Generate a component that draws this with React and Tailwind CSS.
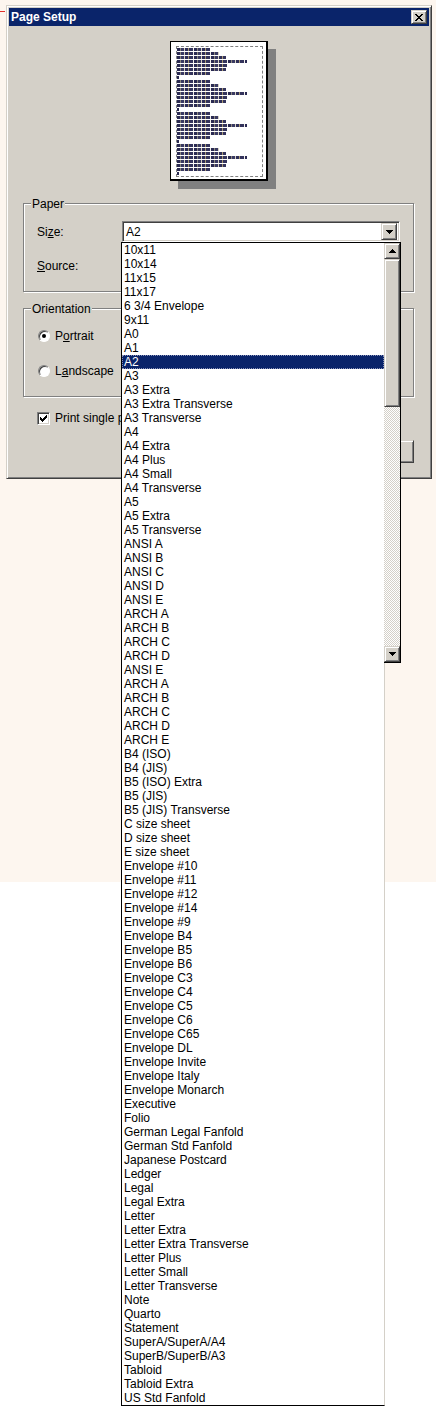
const sizes = [
  "10x11", "10x14", "11x15", "11x17", "6 3/4 Envelope", "9x11", "A0", "A1", "A2", "A3",
  "A3 Extra", "A3 Extra Transverse", "A3 Transverse", "A4", "A4 Extra", "A4 Plus", "A4 Small",
  "A4 Transverse", "A5", "A5 Extra", "A5 Transverse", "ANSI A", "ANSI B", "ANSI C", "ANSI D",
  "ANSI E", "ARCH A", "ARCH B", "ARCH C", "ARCH D", "ANSI E", "ARCH A", "ARCH B", "ARCH C",
  "ARCH D", "ARCH E", "B4 (ISO)", "B4 (JIS)", "B5 (ISO) Extra", "B5 (JIS)", "B5 (JIS) Transverse",
  "C size sheet", "D size sheet", "E size sheet", "Envelope #10", "Envelope #11", "Envelope #12",
  "Envelope #14", "Envelope #9", "Envelope B4", "Envelope B5", "Envelope B6", "Envelope C3",
  "Envelope C4", "Envelope C5", "Envelope C6", "Envelope C65", "Envelope DL", "Envelope Invite",
  "Envelope Italy", "Envelope Monarch", "Executive", "Folio", "German Legal Fanfold",
  "German Std Fanfold", "Japanese Postcard", "Ledger", "Legal", "Legal Extra", "Letter",
  "Letter Extra", "Letter Extra Transverse", "Letter Plus", "Letter Small", "Letter Transverse",
  "Note", "Quarto", "Statement", "SuperA/SuperA/A4", "SuperB/SuperB/A3", "Tabloid",
  "Tabloid Extra", "US Std Fanfold",
];

const selected = 8;

// widths of the fake text lines in the page thumbnail (one paragraph)
const para = [33, 42, 49, 70, 50, 49, 33, 2];

const raised =
  "border border-t-[#d4d0c8] border-l-[#d4d0c8] border-r-[#404040] border-b-[#404040] bg-[#d4d0c8] shadow-[inset_1px_1px_0_#fff,inset_-1px_-1px_0_#808080]";
const sunken =
  "border border-t-[#808080] border-l-[#808080] border-r-white border-b-white shadow-[inset_1px_1px_0_#404040,inset_-1px_-1px_0_#d4d0c8]";

const glyphs = {
  down: ["#######", ".#####.", "..###..", "...#..."],
  up: ["...#...", "..###..", ".#####.", "#######"],
  close: ["##....##", ".##..##.", "..####..", "...##...", "..####..", ".##..##.", "##....##"],
  check: ["......#", ".....##", "#...###", "##.###.", "#####..", ".###...", "..#...."],
};

function Pixels({ name }) {
  const rows = glyphs[name];
  return (
    <svg width={rows[0].length} height={rows.length} shapeRendering="crispEdges" className="block">
      {rows.flatMap((r, y) =>
        [...r].map((c, x) =>
          c === "#" ? <rect key={`${x}-${y}`} x={x} y={y} width="1" height="1" fill="#000" /> : null
        )
      )}
    </svg>
  );
}

function GroupBox({ label, className = "", children }) {
  return (
    <div className={`relative border border-[#808080] shadow-[inset_1px_1px_0_#fff,1px_1px_0_#fff] ${className}`}>
      <span className="absolute -top-[7px] left-[7px] bg-[#d4d0c8] px-[1px] leading-[14px]">{label}</span>
      {children}
    </div>
  );
}

function Combo({ value }) {
  return (
    <div className={`flex h-[21px] w-[278px] items-center bg-white p-[2px] ${sunken}`}>
      <span className="flex-1 truncate pl-[1px] leading-[14px]">{value}</span>
      <span className={`flex h-[17px] w-[16px] items-center justify-center ${raised}`}>
        <Pixels name="down" />
      </span>
    </div>
  );
}

function Radio({ checked }) {
  return (
    <span className="flex h-[12px] w-[12px] items-center justify-center rounded-full border border-t-[#808080] border-l-[#808080] border-r-white border-b-white bg-white shadow-[inset_1px_1px_0_#404040]">
      {checked && <span className="h-[4px] w-[4px] rounded-full bg-black" />}
    </span>
  );
}

function PagePreview() {
  return (
    <div className="flex justify-center">
      <div className="h-[140px] w-[98px] border border-black border-r-2 border-b-2 bg-white pb-[2px] pl-[5px] pr-[3px] pt-[4px] shadow-[8px_8px_0_#808080]">
        <div className="h-full border border-dashed border-[#808080] pt-[1px]">
          {[0, 1, 2, 3].map((b) => (
            <div key={b}>
              {para.map((w, i) => (
                <div
                  key={i}
                  className="mb-[1px] h-[3px] bg-[repeating-linear-gradient(90deg,#2a2a52_0_3px,#8e8a80_3px_4px,#3a3a62_4px_7px,#d8d2c2_7px_8px,#2e2e58_8px_11px,#a89a74_11px_12px,#34345c_12px_16px,#f4f2ee_16px_17px)]"
                  style={{ width: w }}
                />
              ))}
            </div>
          ))}
        </div>
      </div>
    </div>
  );
}

function Dialog() {
  return (
    <div className="flex h-[474px] w-[426px] flex-col border border-t-[#d4d0c8] border-l-[#d4d0c8] border-r-[#404040] border-b-[#404040] bg-[#d4d0c8] p-[2px] shadow-[inset_1px_1px_0_#fff,inset_-1px_-1px_0_#808080]">
      <div className="flex h-[18px] items-center justify-between bg-[#0a246a] px-[2px]">
        <span className="font-bold leading-[18px] text-white">Page Setup</span>
        <span className={`flex h-[14px] w-[16px] items-center justify-center ${raised}`}>
          <Pixels name="close" />
        </span>
      </div>

      <div className="flex flex-col pl-[14px] pr-[15px] pt-[15px]">
        <PagePreview />

        <GroupBox label="Paper" className="mt-[22px] h-[89px] pl-[13px] pt-[17px]">
          <div className="flex items-center">
            <span className="w-[85px] leading-[14px]">
              Si<u>z</u>e:
            </span>
            <Combo value="A2" />
          </div>
          <div className="mt-[13px] flex items-center">
            <span className="w-[85px] leading-[14px]">
              <u>S</u>ource:
            </span>
            <Combo value="" />
          </div>
        </GroupBox>

        <div className="mt-[16px] flex gap-[8px]">
          <GroupBox label="Orientation" className="h-[89px] w-[180px] pl-[14px] pt-[20px]">
            <label className="flex h-[14px] items-center gap-[5px]">
              <Radio checked />
              <span>
                P<u>o</u>rtrait
              </span>
            </label>
            <label className="mt-[21px] flex h-[14px] items-center gap-[5px]">
              <Radio />
              <span>
                L<u>a</u>ndscape
              </span>
            </label>
          </GroupBox>
          <GroupBox label="Margins" className="h-[89px] flex-1" />
        </div>

        <label className="ml-[14px] mt-[14px] flex h-[14px] items-center gap-[5px]">
          <span className={`flex h-[13px] w-[13px] items-center justify-center bg-white ${sunken}`}>
            <Pixels name="check" />
          </span>
          {/* the open size list covers the rest of this label */}
          <span className="w-[66px] overflow-hidden whitespace-nowrap">Print single page per sheet</span>
        </label>

        <div className="mt-[15px] flex justify-end gap-[6px]">
          {["OK", "Cancel", "Printer..."].map((t) => (
            <span key={t} className={`flex h-[23px] w-[75px] items-center justify-center ${raised}`}>
              {t}
            </span>
          ))}
        </div>
      </div>
    </div>
  );
}

function Row({ label, active }) {
  return (
    <div
      className={`h-[14px] whitespace-nowrap pl-[2px] leading-[14px] ${
        active ? "bg-[#0a246a] text-white outline-1 -outline-offset-1 outline-dotted outline-[#8a93b8]" : ""
      }`}
    >
      {label}
    </div>
  );
}

function SizeList() {
  return (
    <div className="absolute left-[121px] top-[242px] flex flex-col">
      <div className="flex w-[280px] border-l border-r border-t border-black">
        <div className="w-[262px] bg-white">
          {sizes.slice(0, 30).map((s, i) => (
            <Row key={i} label={s} active={i === selected} />
          ))}
        </div>
        <div className="flex w-[16px] flex-col border-b border-b-black">
          <span className={`flex h-[16px] items-center justify-center ${raised}`}>
            <Pixels name="up" />
          </span>
          <span className={`h-[148px] ${raised}`} />
          <span className="flex-1 bg-[conic-gradient(#d4d0c8_25%,#fff_0_50%,#d4d0c8_0_75%,#fff_0)] bg-[length:2px_2px]" />
          <span className={`flex h-[16px] items-center justify-center ${raised}`}>
            <Pixels name="down" />
          </span>
        </div>
      </div>
      <div className="w-[264px] border-b border-l border-r border-b-black border-l-black border-r-[#d4d0c8] bg-white">
        {sizes.slice(30).map((s, i) => (
          <Row key={i} label={s} />
        ))}
      </div>
    </div>
  );
}

export default function App() {
  return (
    <div className="relative h-[1413px] w-[436px] overflow-hidden bg-[linear-gradient(#fdf6ef_882px,#ffffff_882px)] font-['Liberation_Sans',Arial,sans-serif] text-[12px] text-black">
      <div className="absolute left-0 top-[11px] h-px w-[5px] bg-[#e0302a]" />
      <div className="pl-[6px] pt-[5px]">
        <Dialog />
      </div>
      <SizeList />
    </div>
  );
}
